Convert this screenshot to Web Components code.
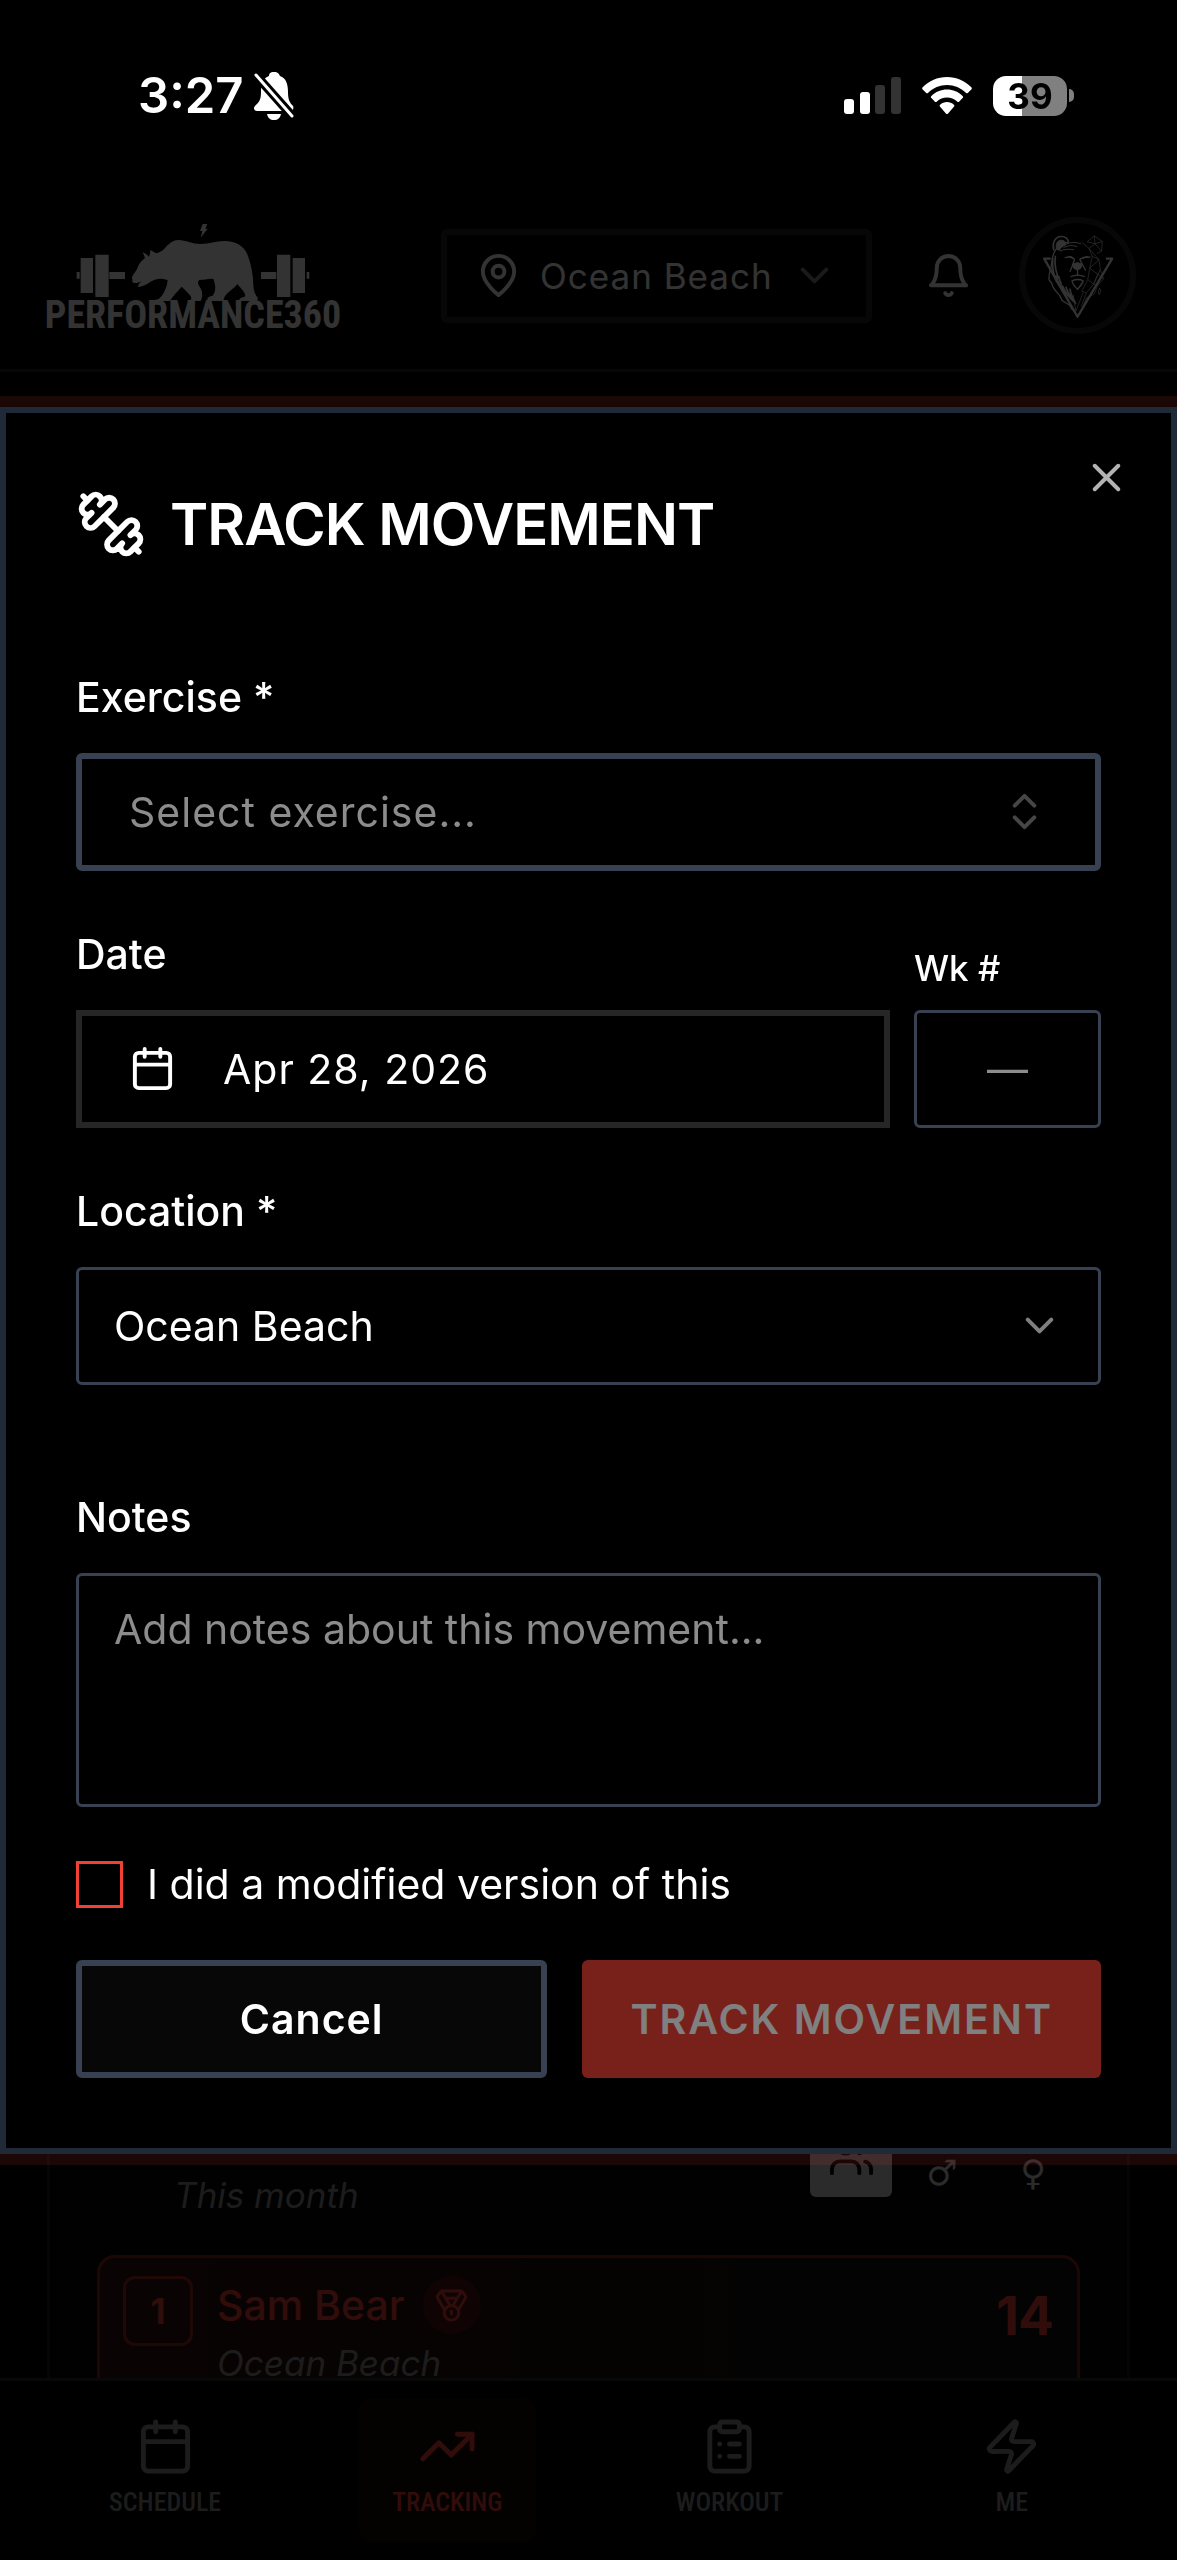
<!DOCTYPE html>
<html lang="en">
<head>
<meta charset="utf-8">
<meta name="viewport" content="width=device-width, initial-scale=1">
<title>Track Movement</title>
<style>
  :root {
    --p360-red: #f04134;
    --p360-text: #fff;
    --p360-muted: #8c8c8c;
    --p360-line: #374151;
    --p360-line-dim: #262626;
    --p360-panel-line: #1f2937;
    --p360-sans: Inter, "Liberation Sans", sans-serif;
    --p360-narrow: "Liberation Sans Narrow", "Roboto Condensed", "DejaVu Sans Condensed", sans-serif;
  }
  * { box-sizing: border-box; }
  body {
    margin: 0;
    background: #000;
    color: var(--p360-text);
    font-family: var(--p360-sans);
    font-size: 41px;
  }
</style>
</head>
<body>
<p360-app>
  <p360-status slot="status" time="3:27" battery="39"></p360-status>
  <p360-header slot="header"></p360-header>
  <p360-leaderboard></p360-leaderboard>
  <p360-nav slot="nav"></p360-nav>
  <p360-dialog slot="dialog" heading="TRACK MOVEMENT">
    <p360-select label="Exercise *" icon="chevronsUpDown" class="thick placeholder">Select exercise...</p360-select>
    <div class="pair">
      <p360-date label="Date" value="Apr 28, 2026"></p360-date>
      <p360-week label="Wk #"></p360-week>
    </div>
    <p360-select label="Location *" icon="chevronDown">Ocean Beach</p360-select>
    <p360-notes class="apart" label="Notes" placeholder="Add notes about this movement..."></p360-notes>
    <p360-check>I did a modified version of this</p360-check>
    <p360-button slot="actions">Cancel</p360-button>
    <p360-button slot="actions" class="primary" disabled>TRACK MOVEMENT</p360-button>
  </p360-dialog>
</p360-app>

<script>
const ICONS = {
  x: '<path d="M18 6 6 18M6 6l12 12"/>',
  bell: '<path d="M6 8a6 6 0 0 1 12 0c0 7 3 9 3 9H3s3-2 3-9"/><path d="M10.3 21a1.94 1.94 0 0 0 3.4 0"/>',
  pin: '<path d="M20 10c0 6-8 12-8 12s-8-6-8-12a8 8 0 0 1 16 0Z"/><circle cx="12" cy="10" r="3"/>',
  calendar: '<path d="M8 2v4M16 2v4M3 10h18"/><rect width="18" height="18" x="3" y="4" rx="2"/>',
  chevronDown: '<path d="m6 9 6 6 6-6"/>',
  chevronsUpDown: '<path d="m7 15 5 5 5-5M7 9l5-5 5 5"/>',
  trending: '<path d="M22 7 13.5 15.5 8.5 10.5 2 17"/><path d="M16 7h6v6"/>',
  clipboard: '<rect width="8" height="4" x="8" y="2" rx="1"/><path d="M16 4h2a2 2 0 0 1 2 2v14a2 2 0 0 1-2 2H6a2 2 0 0 1-2-2V6a2 2 0 0 1 2-2h2M12 11h4M12 16h4M8 11h.01M8 16h.01"/>',
  zap: '<path d="M4 14a1 1 0 0 1-.78-1.63l9.9-10.2a.5.5 0 0 1 .86.46l-1.92 6.02A1 1 0 0 0 13 10h7a1 1 0 0 1 .78 1.63l-9.9 10.2a.5.5 0 0 1-.86-.46l1.92-6.02A1 1 0 0 0 11 14z"/>',
  users: '<path d="M16 21v-2a4 4 0 0 0-4-4H6a4 4 0 0 0-4 4v2"/><circle cx="9" cy="7" r="4"/><path d="M22 21v-2a4 4 0 0 0-3-3.87M16 3.13a4 4 0 0 1 0 7.75"/>',
  medal: '<path d="M7.21 15 2.66 7.14a2 2 0 0 1 .13-2.2L4.4 2.8A2 2 0 0 1 6 2h12a2 2 0 0 1 1.6.8l1.6 2.14a2 2 0 0 1 .14 2.2L16.79 15M11 12 5.12 2.2M13 12l5.88-9.8M8 7h8"/><circle cx="12" cy="17" r="5"/><path d="M12 18v-2h-.5"/>',
  dumbbell: '<path d="M14.4 14.4 9.6 9.6"/><path d="M18.657 21.485a2 2 0 1 1-2.829-2.828l-1.767 1.768a2 2 0 1 1-2.829-2.829l6.364-6.364a2 2 0 1 1 2.829 2.829l-1.768 1.767a2 2 0 1 1 2.828 2.829z"/><path d="m21.5 21.5-1.4-1.4M3.9 3.9 2.5 2.5"/><path d="M6.404 12.768a2 2 0 1 1-2.829-2.829l1.768-1.767a2 2 0 1 1-2.828-2.829l2.828-2.828a2 2 0 1 1 2.829 2.828l1.767-1.768a2 2 0 1 1 2.829 2.829z"/>',
};

const RESET = `
  *, *::before, *::after { box-sizing: border-box; }
  :host { display: block; }
  button, input, select, textarea {
    appearance: none;
    margin: 0;
    padding: 0;
    border: 0;
    border-radius: 0;
    outline: 0;
    background: none;
    color: inherit;
    font: inherit;
    letter-spacing: inherit;
  }
  p360-icon { flex: none; }
`;

const define = (name, render) => {
  customElements.define(name, class extends HTMLElement {
    constructor() {
      super();
      this.attachShadow({ mode: 'open' });
    }

    connectedCallback() {
      const template = document.createElement('template');
      template.innerHTML = `<style>${RESET}</style>` + render(this);
      this.shadowRoot.replaceChildren(template.content.cloneNode(true));
    }
  });
};

define('p360-icon', (el) => `
<style>
  :host { width: 47px; height: 47px; }
  svg { display: block; width: 100%; height: 100%; }
</style>
<svg viewBox="0 0 24 24" fill="none" stroke="currentColor" stroke-width="2" stroke-linecap="round" stroke-linejoin="round" aria-hidden="true">${ICONS[el.getAttribute('name')]}</svg>
`);

/* ── Page frame ── */
define('p360-app', () => `
<style>
  :host {
    display: flex;
    flex-direction: column;
    height: 100vh;
    overflow: hidden;
  }
  main {
    flex: 1;
    min-height: 0;
    display: flex;
    flex-direction: column;
    justify-content: flex-end;
    overflow: hidden;
    padding: 0 47px;
  }
  .overlay {
    position: fixed;
    inset: 0;
    display: flex;
    align-items: center;
    background: rgba(0, 0, 0, 0.8);
  }
  ::slotted([slot="dialog"]) { flex: 1; min-width: 0; }
</style>
<slot name="status"></slot>
<slot name="header"></slot>
<main><slot></slot></main>
<slot name="nav"></slot>
<div class="overlay"><slot name="dialog"></slot></div>
`);

define('p360-status', (el) => `
<style>
  :host {
    position: relative;
    z-index: 1;
    display: flex;
    align-items: center;
    justify-content: space-between;
    height: 182px;
    padding: 9px 103px 0 138px;
    font-weight: 600;
  }
  .side { display: flex; align-items: center; }
  .left { gap: 10px; }
  .right { gap: 21px; }
  time { font-size: 49px; line-height: 60px; }
  svg { display: block; fill: #fff; }
  .battery { display: flex; align-items: center; gap: 2px; }
  .level {
    width: 74px;
    border-radius: 13px;
    background: linear-gradient(to right, #fff 39%, #808080 39%);
    color: #000;
    font-size: 35px;
    font-weight: 700;
    line-height: 40px;
    text-align: center;
  }
  .tip { width: 5px; height: 13px; border-radius: 0 6px 6px 0; background: #808080; }
</style>
<div class="side left">
  <time>${el.getAttribute('time')}</time>
  <svg width="40" height="48" viewBox="0 0 40 48" aria-label="Silent mode">
    <path d="M20 0c4 0 5 2 6 4 6 2 8 8 8 16 0 8 2 11 5 14 1 2 0 5-2 5H3c-3 0-4-3-2-5 4-4 6-6 6-14 0-8 2-14 8-16 0-2 1-4 5-4z"/>
    <path d="M13 42h14c-1 4-3 6-7 6s-6-2-7-6z"/>
    <path d="M0 1 40 46" stroke="#000" stroke-width="9"/>
    <path d="M2 3 38 44" stroke="#fff" stroke-width="3" stroke-linecap="round"/>
  </svg>
</div>
<div class="side right">
  <svg width="57" height="37" viewBox="0 0 57 37" aria-label="Signal">
    <rect y="22" width="10" height="15" rx="3"/>
    <rect x="16" y="15" width="10" height="22" rx="3"/>
    <rect x="31" y="8" width="10" height="29" rx="3" fill="#333"/>
    <rect x="47" width="10" height="37" rx="3" fill="#333"/>
  </svg>
  <svg width="50" height="37" viewBox="0 0 50 37" aria-label="Wi-Fi">
    <path d="M25 0c9.500 0 18 4 24.300 10.200.7.700.7 1.500 0 2.200l-3.300 3.300c-.7.700-1.500.7-2.200 0C38.900 11 32.300 8 25 8S11.100 11 6.200 15.700c-.7.700-1.500.7-2.200 0L.7 12.400c-.7-.7-.7-1.500 0-2.200C7 4 15.500 0 25 0z"/>
    <path d="M25 12.500c6 0 11.500 2.400 15.600 6.400.7.700.7 1.500 0 2.200l-3.300 3.300c-.7.700-1.500.7-2.200 0-2.700-2.500-6.200-4-10.100-4s-7.400 1.500-10.100 4c-.7.700-1.500.7-2.200 0l-3.300-3.300c-.7-.7-.7-1.500 0-2.200 4.100-4 9.600-6.400 15.600-6.400z"/>
    <path d="M25 25c2.600 0 5 1 6.900 2.700.7.700.7 1.400 0 2.100l-5.800 6.600c-.7.700-1.500.7-2.200 0l-5.800-6.600c-.7-.7-.7-1.400 0-2.100C20 26 22.400 25 25 25z"/>
  </svg>
  <div class="battery"><div class="level">${el.getAttribute('battery')}</div><div class="tip"></div></div>
</div>
`);

define('p360-logo', () => `
<style>
  :host { width: 292px; color: #fff; }
  svg { display: block; width: 100%; }
  b {
    display: flex;
    justify-content: center;
    font-family: var(--p360-narrow);
    font-size: 38px;
    font-weight: 700;
    line-height: 28px;
  }
</style>
<svg viewBox="21 24 876 234" fill="currentColor" aria-hidden="true">
  <path d="M488 27h14l-6 14h7l-21 27 5-20h-7z"/>
  <path d="M110 171h9v20h-9zM122 129h37v105h-37zM166 119h40v127h-40zM208 171h47v21h-47z"/>
  <path d="M800 171h8v20h-8zM758 129h37v105h-37zM711 119h40v127h-40zM663 171h46v21h-46z"/>
  <path d="M276 186c5-10 12-16 16-26 4-14 12-22 23-31l-7-18c8 4 13 8 19 14 3-6 4-12 4-20 7 3 12 7 17 10 9-3 17-6 25-14 11-12 24-26 42-26 24 0 40 12 67 12 28 0 42-9 72-9 33 0 58 15 68 40 12 30 17 62 18 90 0 18 5 30 13 40 1 5-1 8-5 10h-51c0-8 6-10 17-13 7-7-9-22-22-38-9 14-34 26-40 43l-2 8h-45c-8-9 1-14 13-16 11-13 9-33 2-50-12-3-26 3-42 3-9 8-1 17 4 25 7 14 5 28 1 36-4 6-11 9-19 12h-30c-2-8 5-11 18-14 8-7-9-21-27-39-15 16-34 38-42 53h-49c-4-8 4-13 21-15 11-7 26-32 28-57-20-9-35-4-51 4-15 10-26 15-38 16 0-8 5-12 12-18-9 5-17 7-23 6-5-2-7-4-6-8z"/>
</svg>
<b>PERFORMANCE360</b>
`);

define('p360-avatar', () => `
<style>
  :host {
    width: 117px;
    height: 117px;
    border: 6px solid var(--p360-line-dim);
    border-radius: 50%;
    overflow: hidden;
  }
  svg { display: block; width: 100%; height: 100%; }
</style>
<svg viewBox="34 29 318 318" fill="none" stroke="#fff" stroke-width="3" stroke-linejoin="round" role="img" aria-label="Profile">
  <path d="M112 137H92l101 176 105-176h-19" stroke-width="7"/>
  <path d="M122 112c-7-20 2-42 22-42 14 0 20 8 22 17" stroke-width="5"/>
  <path d="M129 107c-2-14 2-25 14-26 10 0 15 6 15 14-9 3-16 8-20 17z" fill="#fff"/>
  <path d="M222 86l22-18 24 17-2 29-14 8M244 68l2 24-24-6M268 85l-22 7 20 22M246 92l-18 14" stroke-width="2"/>
  <path d="M166 87c-20 5-37 15-45 34-7 18-5 30-9 45-3 12-7 22-5 35l9 12c0 10 8 18 13 24l10 12 8 15 22 14 9 15" stroke-width="4"/>
  <path d="M118 135c-2 28 0 50 12 72M126 128c-4 30 2 58 18 84M119 170c2 20 10 38 22 52M136 190c4 28 18 50 40 72M128 186c4 26 18 48 30 64M148 220c8 20 20 34 34 48M158 222c4 18 16 32 28 48M170 228c2 16 10 32 18 46" stroke-width="5"/>
  <path d="M150 104c14-8 30-8 42-3M140 114c14-7 28-6 42-4M160 92c16-6 30-5 44 0" stroke-width="3"/>
  <path d="M154 134l20-3 10 8-6 18-8 20M232 132l-20 1-12 6 8 16 10 18" stroke-width="4"/>
  <path d="M178 154l15-5 14 5-4 12-10 6-11-6z" fill="#fff"/>
  <path d="M164 130l16 6M224 130l-16 6M193 172v14M172 192c8-6 14-4 21-5 8 1 14-1 22 5M176 204c12-5 24-5 34 0l-8 14-9 12-12-14z" stroke-width="4"/>
  <path d="M206 88l22 18 10 24 20 10 4 30 10 28-18 20-10 26-24 12-20 50M238 130l-8 36 24 18-12 30 12 4M230 166l-6 34 18 14-22 26M258 140l-28 26M262 170l-20 44M224 200l-18 36 14 4-16 42M228 106l30 34M254 184l18 14" stroke-width="2"/>
  <path d="M194 228l12-10 6-12M180 246l8 50 22-56" stroke-width="2"/>
  <path d="M260 226l4 10-5 10-3-9z" stroke-width="2"/>
</svg>
`);

define('p360-header', () => `
<style>
  :host {
    display: flex;
    align-items: center;
    justify-content: space-between;
    padding: 35px 41px 35px 47px;
    border-bottom: 3px solid var(--p360-line-dim);
  }
  .tools { display: flex; align-items: center; gap: 47px; }
  .picker {
    display: flex;
    align-items: center;
    gap: 18px;
    height: 94px;
    padding: 0 28px;
    border: 6px solid var(--p360-line-dim);
    border-radius: 6px;
    font-size: 35px;
    letter-spacing: 1px;
  }
  .bell { display: flex; margin-left: 6px; }
  .dim { opacity: 0.5; }
</style>
<p360-logo></p360-logo>
<div class="tools">
  <label class="picker">
    <p360-icon name="pin"></p360-icon>
    <select aria-label="Gym location"><option>Ocean Beach</option></select>
    <p360-icon name="chevronDown" class="dim"></p360-icon>
  </label>
  <button class="bell" aria-label="Notifications"><p360-icon name="bell"></p360-icon></button>
  <p360-avatar></p360-avatar>
</div>
`);

/* ── Content behind the dialog, scrolled part-way under the nav ── */
define('p360-leaderboard', () => `
<style>
  :host {
    margin-bottom: -30px;
    padding: 47px 47px 0;
    border: 3px solid #1c1c1c;
    border-bottom: 0;
    background: #050505;
  }
  header {
    display: flex;
    align-items: flex-end;
    justify-content: space-between;
    padding: 0 6px 0 77px;
  }
  i { color: var(--p360-muted); font-size: 35px; line-height: 47px; }
  .filters {
    display: flex;
    align-items: flex-end;
    gap: 9px;
    padding-bottom: 22px;
    color: #d4d4d4;
  }
  .filters button {
    display: flex;
    justify-content: center;
    width: 82px;
    font-family: "DejaVu Sans", sans-serif;
    font-size: 35px;
    line-height: 47px;
  }
  .filters .on {
    padding: 18px 0;
    border-radius: 6px;
    background: #d4d4d4;
    color: #000;
  }
  .row {
    display: grid;
    grid-template-columns: 70px 1fr auto;
    column-gap: 24px;
    margin-top: 36px;
    padding: 18px 24px 18px 23px;
    border: 3px solid #8c231c;
    border-radius: 18px;
    background: linear-gradient(to right, #321210, #1a0f0c 50%, #141216);
    color: var(--p360-red);
  }
  .rank {
    height: 70px;
    border: 3px solid #9c2a22;
    border-radius: 12px;
    font-size: 35px;
    font-weight: 700;
    line-height: 64px;
    text-align: center;
  }
  .name { display: flex; align-items: center; gap: 18px; font-weight: 500; line-height: 58px; }
  .badge {
    display: flex;
    align-items: center;
    justify-content: center;
    width: 58px;
    height: 58px;
    border-radius: 50%;
    background: #4a1713;
  }
  .badge p360-icon { width: 35px; height: 35px; }
  .who i { display: block; margin-top: 6px; }
  .score { font-size: 53px; font-weight: 700; line-height: 80px; letter-spacing: -1px; }
</style>
<header>
  <i>This month</i>
  <div class="filters">
    <button class="on" aria-label="Everyone"><p360-icon name="users"></p360-icon></button>
    <button>♂</button>
    <button>♀</button>
  </div>
</header>
<div class="row">
  <div class="rank">1</div>
  <div class="who">
    <div class="name">Sam Bear<span class="badge"><p360-icon name="medal"></p360-icon></span></div>
    <i>Ocean Beach</i>
  </div>
  <div class="score">14</div>
</div>
`);

define('p360-nav', () => `
<style>
  :host {
    position: relative;
    padding: 18px 24px;
    border-top: 3px solid #2a2a2a;
    background: #000;
    color: var(--p360-muted);
  }
  nav { display: grid; grid-template-columns: repeat(4, 1fr); justify-items: center; }
  a {
    display: flex;
    flex-direction: column;
    align-items: center;
    gap: 10px;
    min-width: 177px;
    padding: 18px 24px 24px;
    border-radius: 12px;
    color: inherit;
    font-family: var(--p360-narrow);
    font-size: 26px;
    font-weight: 500;
    line-height: 32px;
    text-decoration: none;
  }
  a.active { background: #180706; color: var(--p360-red); }
  p360-icon { width: 59px; height: 59px; }
</style>
<nav>
  <a href="#schedule"><p360-icon name="calendar"></p360-icon>SCHEDULE</a>
  <a href="#tracking" class="active" aria-current="page"><p360-icon name="trending"></p360-icon>TRACKING</a>
  <a href="#workout"><p360-icon name="clipboard"></p360-icon>WORKOUT</a>
  <a href="#me"><p360-icon name="zap"></p360-icon>ME</a>
</nav>
`);

/* ── Dialog ── */
define('p360-dialog', (el) => `
<style>
  section {
    position: relative;
    padding: 70px;
    border: 6px solid var(--p360-panel-line);
    background: #000;
    box-shadow: 0 0 0 11px rgba(240, 65, 52, 0.11);
  }
  .title { display: flex; align-items: center; gap: 24px; }
  .title p360-icon { width: 70px; height: 70px; }
  h2 {
    margin: 0;
    font-size: 58px;
    font-weight: 600;
    line-height: 82px;
    letter-spacing: -1px;
  }
  .close { position: absolute; top: 41px; right: 41px; opacity: 0.7; }
  .fields { display: flex; flex-direction: column; gap: 54px; margin-top: 103px; }
  .actions { display: grid; grid-template-columns: 10fr 11fr; gap: 35px; margin-top: 52px; }
  ::slotted(.pair) { display: grid; grid-template-columns: minmax(0, 1fr) 187px; align-items: end; gap: 24px; }
  ::slotted(.apart) { margin-top: 49px; }
</style>
<section role="dialog" aria-label="${el.getAttribute('heading')}">
  <div class="title"><p360-icon name="dumbbell"></p360-icon><h2>${el.getAttribute('heading')}</h2></div>
  <div class="fields"><slot></slot></div>
  <div class="actions"><slot name="actions"></slot></div>
  <button class="close" aria-label="Close"><p360-icon name="x"></p360-icon></button>
</section>
`);

const FIELD = `
  label {
    display: block;
    margin-bottom: 27px;
    font-weight: 500;
    line-height: 58px;
  }
  .box {
    display: flex;
    align-items: center;
    height: 118px;
    padding: 0 35px;
    border: 3px solid var(--p360-line);
    border-radius: 6px;
  }
  input, select, textarea { flex: 1; min-width: 0; }
  ::placeholder { color: var(--p360-muted); opacity: 1; }
`;

define('p360-select', (el) => `
<style>
  ${FIELD}
  .box p360-icon { opacity: 0.5; }
  :host(.thick) .box { padding: 0 47px; border-width: 6px; letter-spacing: 1px; }
  :host(.placeholder) .box { color: var(--p360-muted); }
</style>
<label for="control">${el.getAttribute('label')}</label>
<div class="box">
  <select id="control"><option>${el.textContent}</option></select>
  <p360-icon name="${el.getAttribute('icon')}"></p360-icon>
</div>
`);

define('p360-date', (el) => `
<style>
  ${FIELD}
  .box {
    gap: 47px;
    padding: 0 47px;
    border: 6px solid var(--p360-line-dim);
    border-radius: 0;
    letter-spacing: 1px;
  }
</style>
<label for="control">${el.getAttribute('label')}</label>
<div class="box">
  <p360-icon name="calendar"></p360-icon>
  <input id="control" type="text" value="${el.getAttribute('value')}">
</div>
`);

define('p360-week', (el) => `
<style>
  ${FIELD}
  label { margin-bottom: 18px; font-size: 35px; line-height: 47px; }
  input { text-align: center; }
</style>
<label for="control">${el.getAttribute('label')}</label>
<div class="box"><input id="control" type="text" placeholder="—"></div>
`);

define('p360-notes', (el) => `
<style>
  ${FIELD}
  .box { height: 234px; padding: 24px 35px; }
  textarea { height: 100%; line-height: 58px; resize: none; }
</style>
<label for="control">${el.getAttribute('label')}</label>
<div class="box"><textarea id="control" placeholder="${el.getAttribute('placeholder')}"></textarea></div>
`);

define('p360-check', () => `
<style>
  :host { display: flex; align-items: center; gap: 24px; line-height: 47px; }
  input { width: 47px; height: 47px; border: 3px solid var(--p360-red); }
  input:checked { background: var(--p360-red); }
</style>
<input id="control" type="checkbox">
<label for="control"><slot></slot></label>
`);

define('p360-button', (el) => `
<style>
  button {
    width: 100%;
    height: 118px;
    border: 6px solid var(--p360-line);
    border-radius: 6px;
    background: #070707;
    font-weight: 600;
    letter-spacing: 1px;
  }
  :host(.primary) button { border: 0; background: var(--p360-red); letter-spacing: 2px; }
  button:disabled { opacity: 0.5; }
</style>
<button ${el.hasAttribute('disabled') ? 'disabled' : ''}><slot></slot></button>
`);
</script>
</body>
</html>
